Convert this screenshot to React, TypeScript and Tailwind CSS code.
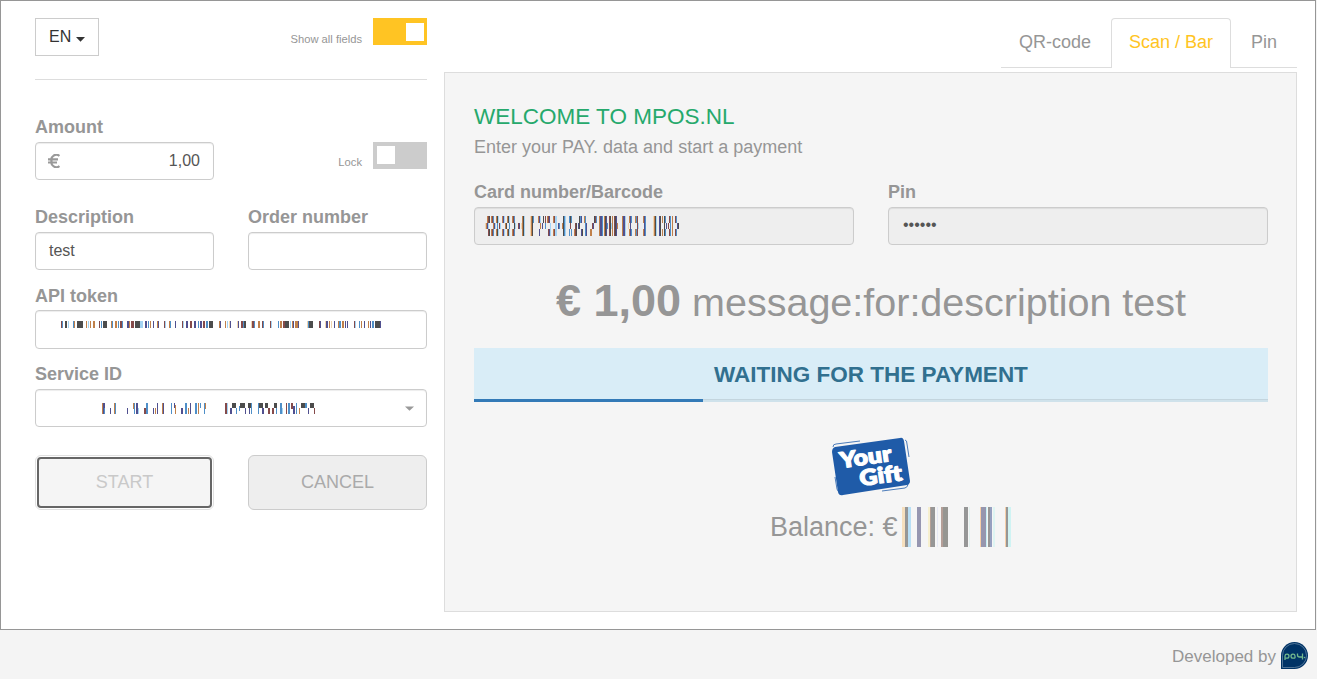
import React from "react";

type Bar = [number, number, number, number, string];

const N = "#4c4c4c", B = "#50508f", U = "#4f8fc8", O = "#c0804a", R = "#854a4a", C = "#a3d3f3", Y = "#f0d4ae";

/* Each entry: x, y, width, height, fill */
const tokenBars: Bar[] = ([
  [0, 1, R], [1, 1, U], [4, 2, N], [7, 1, C], [12, 1, U], [13, 1, O], [16, 6, N], [25, 1, O], [27, 1, C], [29, 1, O], [32, 2, O], [38, 1, R], [40, 1, U], [42, 4, N],
  [50, 1, O], [51, 1, U], [54, 2, O], [57, 1, U], [59, 2, R], [61, 1, U], [66, 2, B], [68, 1, O], [70, 3, R], [74, 5, N], [79, 3, C], [84, 2, B], [87, 1, U], [89, 1, O], [92, 1, B], [96, 1, O], [97, 1, B], [103, 1, R], [104, 1, C], [108, 1, O], [109, 1, U], [114, 1, B],
  [121, 1, R], [122, 1, C], [125, 2, B], [129, 2, R], [133, 2, B], [137, 1, U], [139, 2, B], [142, 2, R], [145, 2, U], [148, 4, N], [158, 1, O], [159, 1, B], [164, 1, O], [166, 1, C], [168, 1, Y], [169, 1, B],
  [176, 1, Y], [177, 1, B], [180, 2, R], [182, 1, U], [183, 2, N], [190, 1, Y], [191, 2, R], [193, 1, U], [197, 2, O], [201, 1, R], [202, 1, U], [209, 1, R], [210, 1, C], [217, 1, U], [219, 2, O], [222, 2, R], [224, 4, N], [229, 1, C], [231, 1, O], [232, 1, B], [234, 3, O], [237, 1, B],
  [246, 1, Y], [247, 1, U], [248, 4, N], [258, 1, R], [259, 1, B], [264, 1, Y], [265, 2, B], [268, 1, O], [270, 1, Y], [273, 1, B], [277, 1, O], [278, 2, U], [281, 2, O], [284, 1, B], [286, 1, B], [293, 1, R], [294, 1, C], [298, 1, U], [300, 1, O], [303, 1, B], [307, 1, O], [309, 1, B], [311, 2, U], [314, 5, N], [319, 1, B],
] as [number, number, string][]).map(([x, w, c]) => [x, 0, w, 7, c]);

const serviceBars: Bar[] = [
  [0, 0, 1, 11, O], [1, 0, 2, 11, B], [2, 5, 1, 6, U], [8, 5, 1, 6, B], [12, 0, 1, 11, O], [13, 0, 1, 11, U],
  [25, 5, 1, 6, B], [31, 0, 1, 6, O], [32, 0, 1, 11, U], [34, 0, 2, 11, B], [36, 5, 1, 6, C], [42, 5, 2, 6, R], [44, 0, 2, 11, U], [51, 5, 1, 6, B], [53, 5, 1, 6, O], [55, 0, 1, 11, B], [60, 0, 1, 11, O], [61, 0, 1, 11, B],
  [69, 0, 1, 11, U], [72, 0, 1, 5, B], [73, 2, 1, 9, O], [79, 5, 2, 6, B], [83, 0, 2, 11, U], [86, 5, 1, 6, O], [88, 0, 1, 11, B], [93, 0, 2, 11, U], [96, 0, 1, 11, O], [98, 0, 1, 5, U], [102, 0, 1, 11, U], [103, 0, 1, 6, O],
  [123, 0, 2, 11, R], [125, 0, 1, 11, C], [128, 5, 2, 6, B], [130, 0, 4, 5, N], [134, 5, 1, 6, U], [138, 0, 5, 5, N], [137, 3, 1, 5, U], [143, 5, 1, 6, B], [146, 0, 4, 5, N], [147, 5, 1, 6, B], [149, 0, 1, 11, U],
  [156, 0, 1, 11, U], [157, 0, 4, 5, N], [160, 5, 2, 6, B], [163, 0, 3, 5, N], [166, 5, 2, 6, R], [170, 5, 2, 6, R], [172, 0, 3, 5, N], [174, 5, 1, 6, U], [178, 0, 2, 11, U], [180, 5, 1, 6, C], [184, 0, 1, 11, R], [186, 0, 2, 11, U], [189, 0, 2, 6, R], [191, 3, 2, 8, B], [194, 0, 1, 11, U], [197, 5, 1, 6, O], [199, 0, 4, 5, N], [203, 0, 2, 5, U], [206, 5, 1, 6, B], [208, 0, 4, 5, N], [212, 5, 1, 6, R],
];

/* Three stacked bands of thin strokes: x, fill, bands covered (t, m, b) */
const cardStrokes: [number, string, string][] = [
  [0, Y, "m"], [1, O, "m"], [2, O, "t"], [2, B, "m"], [3, R, "tb"], [4, N, "tb"], [3, C, "m"], [6, O, "tb"], [7, R, "tb"], [8, U, "tb"], [8, O, "m"], [9, B, "m"], [10, C, "m"],
  [11, O, "tb"], [12, N, "tb"], [13, C, "tb"], [12, U, "m"], [14, R, "m"], [15, C, "m"], [17, O, "tb"], [18, B, "tb"], [19, C, "tb"], [20, O, "m"], [21, N, "m"], [22, O, "tb"], [23, N, "tb"], [24, C, "tb"], [24, U, "m"],
  [27, O, "tb"], [28, R, "tb"], [29, U, "tb"], [29, N, "m"], [30, C, "m"], [33, R, "m"], [34, B, "m"], [36, Y, "m"], [37, O, "tmb"], [38, N, "tmb"], [39, C, "tmb"],
  [45, Y, "tmb"], [46, O, "tmb"], [47, N, "tmb"], [48, U, "t"], [53, O, "t"], [54, B, "tb"], [55, C, "t"], [55, O, "m"], [57, B, "m"], [58, N, "t"], [60, R, "t"], [60, U, "m"], [62, O, "t"], [63, R, "tb"], [64, B, "tb"], [65, C, "mb"],
  [68, O, "tb"], [69, R, "tb"], [70, C, "tmb"], [71, C, "tmb"], [73, B, "m"], [74, U, "m"], [77, O, "m"], [78, N, "tmb"], [79, U, "tmb"], [80, C, "tmb"], [84, U, "tb"], [85, N, "t"], [86, U, "tb"], [85, R, "m"],
  [89, O, "b"], [90, R, "mb"], [91, N, "mb"], [93, B, "m"], [94, N, "tm"], [95, U, "t"], [96, B, "tb"], [97, N, "b"], [99, O, "t"], [100, U, "tmb"], [101, B, "mb"], [105, O, "b"], [106, O, "b"], [107, R, "m"], [108, B, "m"], [109, N, "t"], [110, R, "t"], [111, U, "t"],
  [114, O, "tmb"], [115, B, "tmb"], [116, B, "tmb"], [117, U, "tmb"], [119, O, "tmb"], [120, N, "tmb"], [121, B, "tmb"], [122, U, "m"], [124, R, "tmb"], [125, N, "tmb"], [126, C, "m"], [127, O, "tmb"], [129, R, "tmb"], [130, N, "tmb"], [131, B, "tmb"], [132, O, "m"],
  [137, O, "tmb"], [138, B, "tmb"], [139, B, "tmb"], [140, C, "tmb"], [143, Y, "m"], [144, O, "tb"], [145, B, "tmb"], [146, U, "tb"], [150, O, "tb"], [151, U, "tb"], [152, R, "tmb"], [153, C, "m"], [158, O, "tb"], [159, B, "tmb"], [160, U, "tmb"],
  [168, Y, "tmb"], [169, O, "tmb"], [170, N, "tmb"], [171, C, "tmb"], [174, B, "tmb"], [175, N, "tmb"], [177, O, "tb"], [179, N, "tmb"], [180, U, "tb"], [181, B, "m"], [183, R, "m"], [184, R, "tb"], [185, U, "tmb"], [187, O, "tmb"], [190, R, "tb"], [191, U, "tb"], [192, B, "m"], [193, N, "m"],
];
const bandTop: Record<string, number> = { t: 0, m: 7, b: 13 };
const cardBars: Bar[] = cardStrokes.flatMap(([x, c, bands]) => [...bands].map((k): Bar => [x, bandTop[k], 1, k === "m" ? 6 : 7, c]));

const balanceBars: Bar[] = ([
  [0, 3, "#f6dfbd"], [3, 3, "#969696"], [6, 3, "#b8dff5"], [15, 4, "#9696b0"], [26, 2, "#f6efcf"], [28, 1, "#b5a096"], [29, 4, "#969696"], [35, 1, "#e6e9f5"], [39, 2, "#b59f98"], [41, 5, "#969692"], [62, 4, "#969696"], [67, 1, "#e4f2f0"], [78, 1, "#f6cfa8"], [79, 5, "#9696ae"], [84, 1, "#c4f0f4"], [86, 2, "#969696"], [88, 2, "#96a0c0"], [91, 2, "#def5f3"], [103, 1, "#f6cfa8"], [104, 2, "#969696"], [106, 3, "#cff3f3"],
] as [number, number, string][]).map(([x, w, c]) => [x, 0, w, 40, c]);

function Bars({ bars, w, h, className = "" }: { bars: Bar[]; w: number; h: number; className?: string }) {
  return (
    <svg width={w} height={h} viewBox={`0 0 ${w} ${h}`} shapeRendering="crispEdges" className={`block shrink-0 ${className}`} aria-hidden="true">
      {bars.map(([x, y, bw, bh, c], i) => (
        <rect key={i} x={x} y={y} width={bw} height={bh} fill={c} />
      ))}
    </svg>
  );
}

const fieldBase = "flex items-center rounded border border-[#cccccc] text-base text-[#555555] shadow-[inset_0_1px_1px_rgba(0,0,0,0.075)]";
const field = `${fieldBase} bg-white`;
const fieldDisabled = `${fieldBase} bg-[#eeeeee]`;

function Label({ children }: { children: React.ReactNode }) {
  return <div className="h-[25px] text-lg leading-5 font-bold">{children}</div>;
}

function Toggle({ on }: { on?: boolean }) {
  return on ? (
    <div className="ml-[11px] flex h-[27px] w-[54px] justify-end bg-[#ffc423] pt-[5px] pr-[3px]"><div className="size-[18px] bg-white" /></div>
  ) : (
    <div className="ml-[11px] flex h-[27px] w-[54px] bg-[#cccccc] pt-1 pl-1"><div className="size-[18px] bg-white" /></div>
  );
}

function Sidebar() {
  return (
    <div className="w-[392px] shrink-0">
      <div className="flex h-[62px] items-start justify-between border-b border-[#dddddd]">
        <button className="flex h-[38px] w-16 items-center border border-[#cccccc] pl-[13px] text-base text-[#333333]">
          EN
          <svg width="9" height="5" viewBox="0 0 9 5" className="mt-1 ml-[5px] shrink-0"><path d="M0 0h9L4.500 4.700z" fill="#333" /></svg>
        </button>
        <div className="flex items-start">
          <span className="pt-[13px] text-[11.2px] leading-4">Show all fields</span>
          <Toggle on />
        </div>
      </div>
      <div className="mt-[37px] flex items-start justify-between">
        <div>
          <Label>Amount</Label>
          <div className={`${field} h-[38px] w-[179px] justify-between px-[13px]`}>
            <svg width="12" height="14" viewBox="0 0 12 14" className="-ml-px" aria-hidden="true">
              <path d="M11.500 1.900A5 5 0 0 0 3.500 7A5 5 0 0 0 11.500 12.100M0 5.300h10M0 8.500h9" fill="none" stroke="#999" strokeWidth="2.200" />
            </svg>
            <span>1,00</span>
          </div>
        </div>
        <div className="mt-[25px] flex items-start">
          <span className="pt-3 text-[11.2px] leading-4">Lock</span>
          <Toggle />
        </div>
      </div>
      <div className="mt-[27px] flex justify-between">
        <div>
          <Label>Description</Label>
          <div className={`${field} h-[38px] w-[179px] px-[13px]`}>test</div>
        </div>
        <div>
          <Label>Order number</Label>
          <div className={`${field} h-[38px] w-[179px]`} />
        </div>
      </div>
      <div className="mt-4">
        <Label>API token</Label>
        <div className={`${field} -mt-px h-[39px] pb-2.5 pl-[25px]`}><Bars bars={tokenBars} w={321} h={7} /></div>
      </div>
      <div className="mt-[15px]">
        <Label>Service ID</Label>
        <div className={`${field} h-[38px] justify-between pr-3 pl-[66px]`}>
          <Bars bars={serviceBars} w={214} h={11} />
          <svg width="9" height="5" viewBox="0 0 9 5"><path d="M0 0.500h9L4.500 4.700z" fill="#999" /></svg>
        </div>
      </div>
      <div className="mt-7 flex justify-between text-lg">
        <button className="flex h-[55px] w-[179px] rounded-md border border-[#e0e0e0] p-px">
          <span className="flex h-full w-full items-center justify-center rounded border-2 border-[#666666] bg-[#f5f5f5] pb-0.5 text-[#c9c9c9]">START</span>
        </button>
        <button className="h-[55px] w-[179px] rounded-md border border-[#cccccc] bg-[#eeeeee] pb-0.5 text-[#aaaaaa]">CANCEL</button>
      </div>
    </div>
  );
}

function GiftLogo() {
  return (
    <svg width="78" height="60" viewBox="0 0 78 60">
      <g fill="none" stroke="#4c7cba" strokeWidth="1">
        <path d="M1 10Q1 7 4 7L28 4M73 3Q75 3 75 7L77 20M3 40L5 52Q5 54 8 55M50 54L73 51Q76 50 76 47" />
      </g>
      <path d="M3 10L68 1Q71 0 72 4L78 44Q78 47 75 48L11 58Q7 59 6 55L0 15Q0 11 3 10Z" fill="#1f5ba8" />
      <g transform="rotate(-8 39 30)" fill="#fff" stroke="#fff" strokeWidth="1" strokeLinejoin="round" fontFamily="Lato, sans-serif" fontWeight="800" fontSize="22">
        <text x="9" y="27" textLength="52" lengthAdjust="spacingAndGlyphs">Your</text>
        <text x="26" y="47.500" textLength="43" lengthAdjust="spacingAndGlyphs">Gift</text>
      </g>
    </svg>
  );
}

function Terminal() {
  return (
    <div className="ml-[17px] flex w-[853px] shrink-0 flex-col">
      <nav className="flex h-[50px] justify-end text-lg leading-[48px]">
        <span className="w-[110px] border-b border-[#dddddd] pl-[18px]">QR-code</span>
        <span className="w-[120px] rounded-t border border-b-0 border-[#dddddd] pl-[17px] leading-[46px] text-[#ffc423]">Scan / Bar</span>
        <span className="w-[66px] border-b border-[#dddddd] pl-5">Pin</span>
      </nav>
      <section className="mt-1 h-[540px] border border-[#dddddd] bg-[#f5f5f5] pt-[30px] pr-7 pl-[29px]">
        <h1 className="text-[22.5px] leading-7 text-[#26a96c]">WELCOME TO MPOS.NL</h1>
        <p className="mt-1 text-lg leading-6">Enter your PAY. data and start a payment</p>
        <div className="mt-[23px] flex justify-between">
          <div>
            <Label>Card number/Barcode</Label>
            <div className={`${fieldDisabled} h-[38px] w-[380px] pl-2.5`}><Bars bars={cardBars} w={196} h={20} /></div>
          </div>
          <div>
            <Label>Pin</Label>
            <div className={`${fieldDisabled} h-[38px] w-[380px] pb-0.5 pl-3.5`}>••••••</div>
          </div>
        </div>
        <div className="mt-[30px] flex h-[52px] items-baseline justify-center whitespace-pre text-[39.5px] leading-[52px]">
          <strong className="text-[45px]">€ 1,00</strong> message:for:description test
        </div>
        <div className="mt-[21px] h-[54px] bg-[#d9edf7]">
          <div className="h-[51px] text-center text-[22.5px] leading-[54px] font-bold text-[#31708f]">WAITING FOR THE PAYMENT</div>
          <div className="h-[3px] border-t border-[#c3d5de] bg-[#cfe2eb]">
            <div className="-mt-px h-[3px] w-[229px] bg-[#337ab7]" />
          </div>
        </div>
        <div className="mt-[35px] flex justify-center"><GiftLogo /></div>
        <div className="mt-[10px] ml-[296px] flex h-10 items-center text-[27px]">
          Balance: €
          <Bars bars={balanceBars} w={109} h={40} className="ml-1" />
        </div>
      </section>
    </div>
  );
}

export default function App() {
  return (
    <div className="h-[679px] w-[1317px] overflow-hidden bg-[#f4f4f4] font-['Liberation_Sans',Arial,sans-serif] text-[#969696]">
      <main className="flex h-[630px] w-[1316px] border border-[#969696] bg-white pt-[17px] pl-[34px]">
        <Sidebar />
        <Terminal />
      </main>
      <footer className="flex h-[49px] items-center justify-end pt-1 pr-[9px] text-[17px]">
        Developed by
        <svg width="27" height="27" viewBox="0 0 27 27" className="-mt-0.5 ml-[5px]">
          <path d="M0 27V13.500A13.500 13.500 0 1 1 13.500 27Z" fill="#003366" />
          <path d="M1.500 25.500V13.500A12 12 0 1 1 13.500 25.500Z" fill="none" stroke="#718fab" strokeWidth="0.700" />
          <g fill="none" stroke="#72b88d" strokeWidth="1.300">
            <path d="M4 18v-4a2 2 0 1 1 2 2.200h-2M14 16.200v-2.200a2 2 0 1 0-2 2.200H14M16.500 11.500v1.500q0 2 2 2H21.500M21.500 11.500v6" />
          </g>
          <circle cx="23.500" cy="15.500" r="0.800" fill="#72b88d" />
        </svg>
      </footer>
    </div>
  );
}
